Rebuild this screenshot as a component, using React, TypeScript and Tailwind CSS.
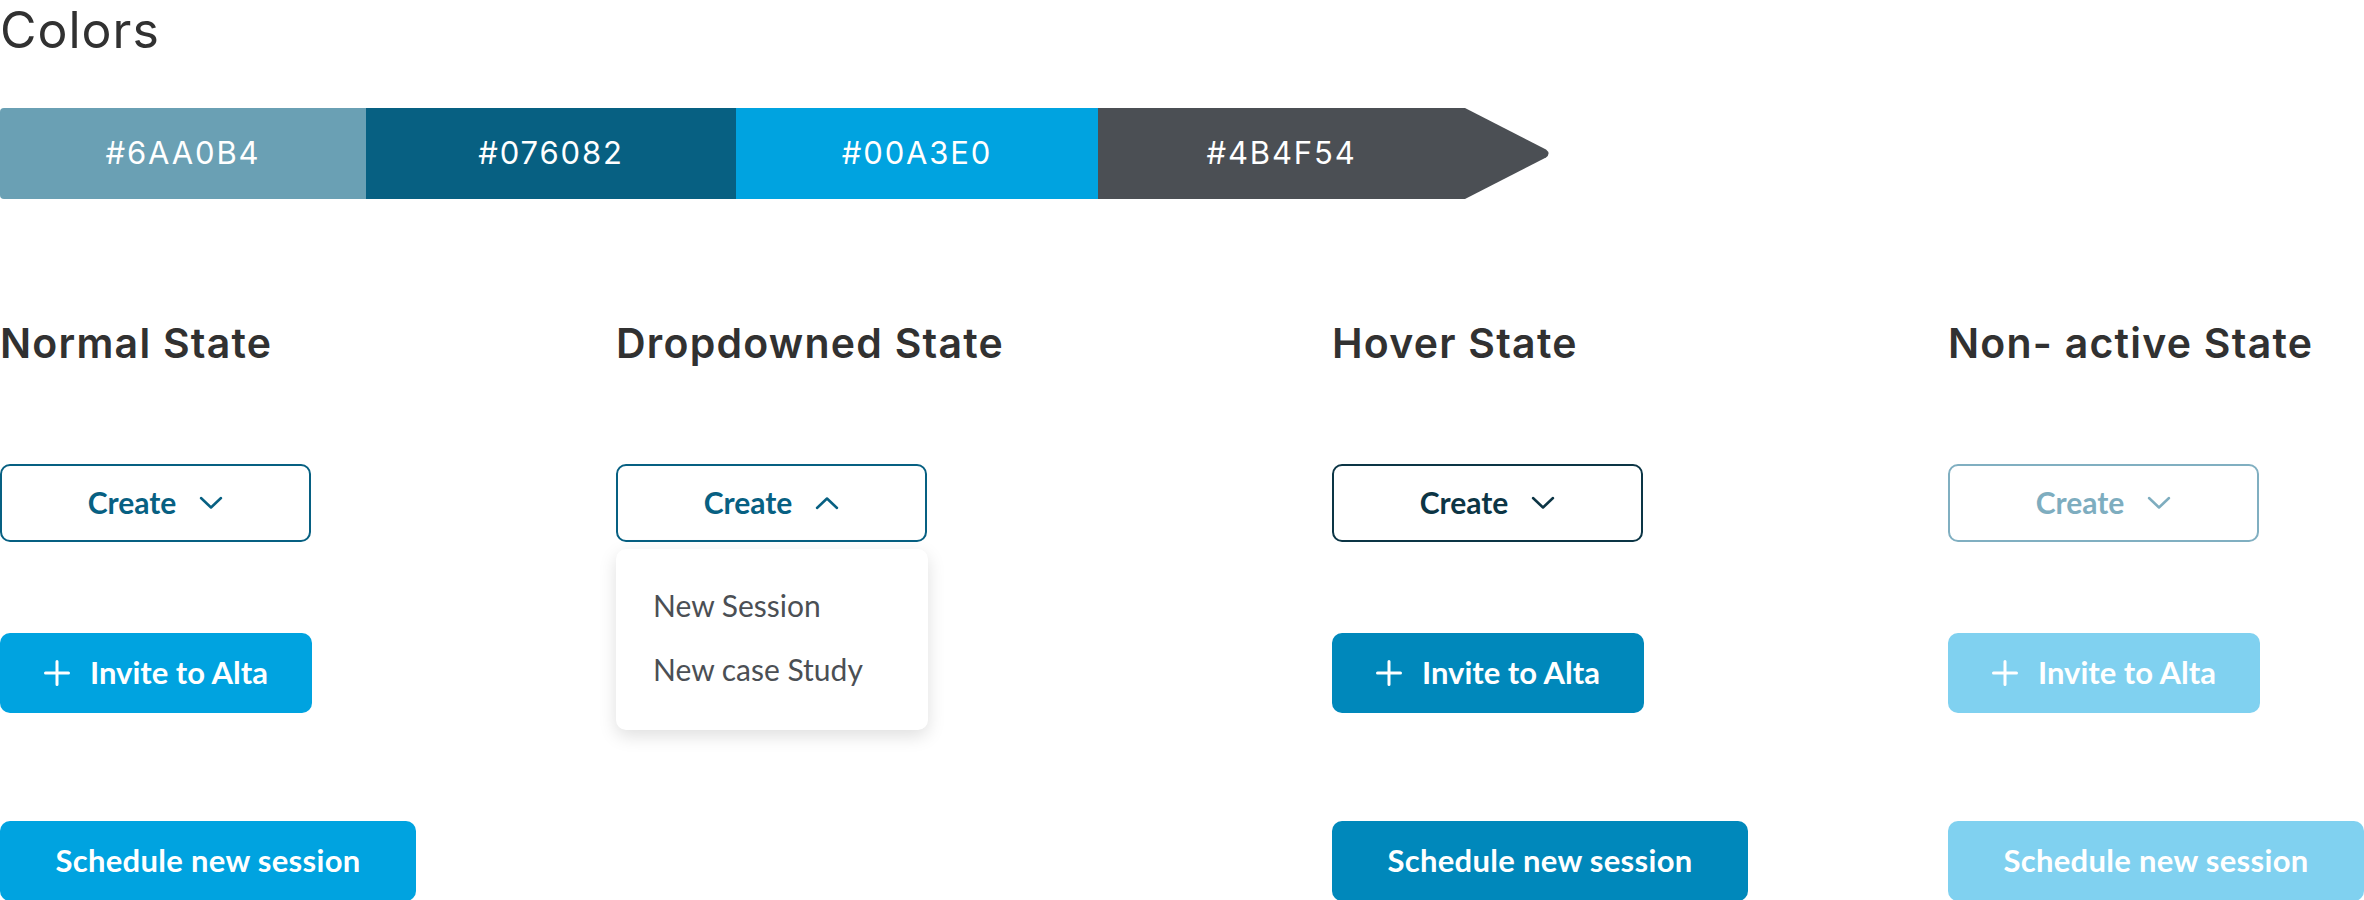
import React from "react";

type Tone = "normal" | "hover" | "disabled";

const swatches = [
  { hex: "#6AA0B4", cls: "w-[366px] bg-[#6AA0B4] rounded-l-[4px]" },
  { hex: "#076082", cls: "w-[370px] bg-[#076082]" },
  { hex: "#00A3E0", cls: "w-[362px] bg-[#00A3E0]" },
];

const outline: Record<Tone, string> = {
  normal: "border-[#076082] text-[#076082]",
  hover: "border-[#0c3545] text-[#0c3545]",
  disabled: "border-[#80afc1] text-[#7eadbf]",
};

const filled: Record<Tone, string> = {
  normal: "bg-[#00A3E0]",
  hover: "bg-[#0088BB]",
  disabled: "bg-[#80D1F0]",
};

const Chevron: React.FC<{ up?: boolean }> = ({ up }) => (
  <svg width="24" height="14" viewBox="0 0 24 14" fill="none">
    <path
      d={up ? "M2 12 L12 2.5 L22 12" : "M2 2 L12 11.5 L22 2"}
      stroke="currentColor"
      strokeWidth="2.5"
      strokeLinecap="round"
      strokeLinejoin="round"
    />
  </svg>
);

const Plus: React.FC = () => (
  <svg width="26" height="26" viewBox="0 0 26 26" fill="none">
    <path d="M13 1.5 V24.5 M1.5 13 H24.5" stroke="white" strokeWidth="3" strokeLinecap="round" />
  </svg>
);

const CreateButton: React.FC<{ tone: Tone; open?: boolean }> = ({ tone, open }) => (
  <button
    className={`flex h-[78px] w-[311px] items-center justify-center gap-[23px] rounded-[10px] border-2 bg-white [font-family:Lato,sans-serif] text-[30px] font-bold ${outline[tone]}`}
  >
    <span className="-mt-[2px]">Create</span>
    <Chevron up={open} />
  </button>
);

const InviteButton: React.FC<{ tone: Tone }> = ({ tone }) => (
  <button
    className={`flex h-[80px] w-[312px] items-center justify-center gap-[20px] rounded-[10px] [font-family:Lato,sans-serif] text-[31px] font-bold text-white ${filled[tone]}`}
  >
    <Plus />
    <span className="-mt-[2px]">Invite to Alta</span>
  </button>
);

const ScheduleButton: React.FC<{ tone: Tone }> = ({ tone }) => (
  <button
    className={`flex h-[80px] w-[416px] items-center justify-center rounded-[10px] [font-family:Lato,sans-serif] text-[31px] font-bold tracking-[0.01em] text-white ${filled[tone]}`}
  >
    <span className="-mt-[2px]">Schedule new session</span>
  </button>
);

const Heading: React.FC<{ children: React.ReactNode }> = ({ children }) => (
  <h2 className="[font-family:Inter,sans-serif] text-[41px] leading-[48px] font-semibold tracking-[0.03em] text-[#313131]">
    {children}
  </h2>
);

const StateColumn: React.FC<{ title: string; tone: Tone }> = ({ title, tone }) => (
  <div className="flex flex-col items-start">
    <Heading>{title}</Heading>
    <div className="mt-[97px]">
      <CreateButton tone={tone} />
    </div>
    <div className="mt-[91px]">
      <InviteButton tone={tone} />
    </div>
    <div className="mt-[108px]">
      <ScheduleButton tone={tone} />
    </div>
  </div>
);

const App: React.FC = () => {
  return (
    <div className="h-[900px] w-[2364px] overflow-hidden bg-white">
      <h1 className="[font-family:Inter,sans-serif] text-[50px] leading-[60px] font-normal tracking-[0.02em] text-[#313131]">
        Colors
      </h1>

      <div className="mt-[48px] flex h-[91px] [font-family:Inter,sans-serif] text-[31px] tracking-[0.06em] text-white">
        {swatches.map((s) => (
          <div key={s.hex} className={`flex items-center justify-center ${s.cls}`}>
            {s.hex}
          </div>
        ))}
        <div className="flex w-[367px] items-center justify-center bg-[#4B4F54]">#4B4F54</div>
        <svg width="87" height="91" viewBox="0 0 87 91" className="-ml-px">
          <path d="M0 0 H1 L82 41.5 Q87 45.5 82 49.5 L1 91 H0 Z" fill="#4B4F54" />
        </svg>
      </div>

      <div className="mt-[120px] grid grid-cols-[616px_716px_616px_1fr]">
        <StateColumn title="Normal State" tone="normal" />

        <div className="flex flex-col items-start">
          <Heading>Dropdowned State</Heading>
          <div className="relative mt-[97px]">
            <CreateButton tone="normal" open />
            <div className="absolute left-0 top-[85px] w-[312px] rounded-[10px] bg-white pt-[24px] pb-[29px] pl-[37px] shadow-[0_6px_18px_rgba(0,0,0,0.13)] [font-family:Lato,sans-serif] text-[30px] text-[#4B4F54]">
              <div className="leading-[64px]">New Session</div>
              <div className="leading-[64px]">New case Study</div>
            </div>
          </div>
        </div>

        <StateColumn title="Hover State" tone="hover" />
        <StateColumn title="Non- active State" tone="disabled" />
      </div>
    </div>
  );
};

export default App;
